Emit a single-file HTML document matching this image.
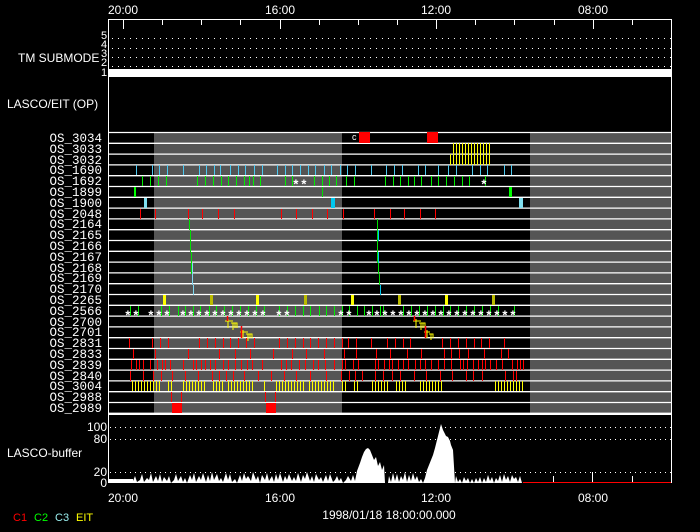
<!DOCTYPE html>
<html><head><meta charset="utf-8"><style>
html,body{margin:0;padding:0;background:#000;}
svg{display:block}
text{font-family:"Liberation Sans",sans-serif;fill:#fff;font-size:12px}
.m{font-family:"Liberation Mono",monospace;font-size:12.5px}
.a{font-family:"Liberation Mono",monospace;font-size:13px;font-weight:bold}
</style></head><body>
<svg width="700" height="532" viewBox="0 0 700 532" xmlns="http://www.w3.org/2000/svg">
<defs>
<pattern id="yp" width="3" height="10" patternUnits="userSpaceOnUse"><rect x="0" y="0" width="1" height="10" fill="#ffff00"/></pattern>
</defs>
<rect width="700" height="532" fill="#000"/>
<g text-anchor="middle">
<text x="123" y="14">20:00</text><text x="280" y="14">16:00</text><text x="436" y="14">12:00</text><text x="593" y="14">08:00</text>
</g>
<path d="M108.5 483 V19.5 H671.5 V483" stroke="#fff" fill="none"/>
<path d="M123.5 20v9M280.5 20v9M436.5 20v9M593.5 20v9M162.5 20v5M201.5 20v5M240.5 20v5M319.5 20v5M358.5 20v5M397.5 20v5M475.5 20v5M514.5 20v5M554.5 20v5M632.5 20v5" stroke="#fff"/>
<text x="18" y="62">TM SUBMODE</text>
<g text-anchor="middle"><text x="104" y="39" style="font-size:11px">5</text><text x="104" y="48" style="font-size:11px">4</text><text x="104" y="57" style="font-size:11px">3</text><text x="104" y="66" style="font-size:11px">2</text><text x="104" y="76" style="font-size:11px">1</text></g>
<path d="M112 38.5H671M112 48.5H671M112 57.5H671M112 66.5H671" stroke="#fff" stroke-dasharray="1 5"/>
<rect x="109" y="69" width="562" height="8" fill="#fff"/>
<text x="7" y="108">LASCO/EIT (OP)</text>
<rect x="154" y="132" width="188" height="281" fill="#555"/>
<rect x="530" y="132" width="141" height="281" fill="#555"/>
<path d="M109 132.5H671M109 143.3H671M109 154.1H671M109 164.9H671M109 175.7H671M109 186.5H671M109 197.3H671M109 208.1H671M109 218.9H671M109 229.7H671M109 240.5H671M109 251.3H671M109 262.1H671M109 272.9H671M109 283.7H671M109 294.5H671M109 305.3H671M109 316.1H671M109 326.9H671M109 337.7H671M109 348.5H671M109 359.3H671M109 370.1H671M109 380.9H671M109 391.7H671M109 402.5H671M109 413.3H671" stroke="#fff" stroke-width="1.3"/>
<g text-anchor="end">
<text class="m" x="102" y="142">OS_3034</text><text class="m" x="102" y="153">OS_3033</text><text class="m" x="102" y="164">OS_3032</text><text class="m" x="102" y="174">OS_1690</text><text class="m" x="102" y="185">OS_1692</text><text class="m" x="102" y="196">OS_1899</text><text class="m" x="102" y="207">OS_1900</text><text class="m" x="102" y="218">OS_2048</text><text class="m" x="102" y="228">OS_2164</text><text class="m" x="102" y="239">OS_2165</text><text class="m" x="102" y="250">OS_2166</text><text class="m" x="102" y="261">OS_2167</text><text class="m" x="102" y="272">OS_2168</text><text class="m" x="102" y="282">OS_2169</text><text class="m" x="102" y="293">OS_2170</text><text class="m" x="102" y="304">OS_2265</text><text class="m" x="102" y="315">OS_2566</text><text class="m" x="102" y="326">OS_2700</text><text class="m" x="102" y="336">OS_2701</text><text class="m" x="102" y="347">OS_2831</text><text class="m" x="102" y="358">OS_2833</text><text class="m" x="102" y="369">OS_2839</text><text class="m" x="102" y="380">OS_2840</text><text class="m" x="102" y="390">OS_3004</text><text class="m" x="102" y="401">OS_2988</text><text class="m" x="102" y="412">OS_2989</text>
</g>
<rect x="359" y="132" width="11" height="11" fill="#f00"/><rect x="427" y="132" width="11" height="11" fill="#f00"/>
<text x="352" y="140" style="font-size:9px">c</text>
<rect x="453" y="143" width="39" height="11" fill="url(#yp)"/>
<rect x="448" y="154" width="44" height="11" fill="url(#yp)"/>
<path d="M136.5 165v10M152.5 165v10M159.5 165v10M167.5 165v10M183.5 165v10M199.5 165v10M206.5 165v10M214.5 165v10M220.5 165v10M230.5 165v10M238.5 165v10M245.5 165v10M254.5 165v10M262.5 165v10M277.5 165v10M285.5 165v10M292.5 165v10M300.5 165v10M308.5 165v10M315.5 165v10M324.5 165v10M331.5 165v10M340.5 165v10M347.5 165v10M355.5 165v10M371.5 165v10M386.5 165v10M394.5 165v10M402.5 165v10M418.5 165v10M425.5 165v10M438.5 165v10M448.5 165v10M456.5 165v10M472.5 165v10M480.5 165v10M487.5 165v10M504.5 165v10M511.5 165v10" stroke="#4cc8f0"/>
<path d="M142.5 176v10M150.5 176v10M158.5 176v10M166.5 176v10M197.5 176v10M205.5 176v10M213.5 176v10M221.5 176v10M228.5 176v10M236.5 176v10M244.5 176v10M249.5 176v10M253.5 176v10M260.5 176v10M285.5 176v10M292.5 176v10M314.5 176v10M322.5 176v10M329.5 176v10M336.5 176v10M346.5 176v10M354.5 176v10M385.5 176v10M393.5 176v10M400.5 176v10M408.5 176v10M414.5 176v10M421.5 176v10M431.5 176v10M438.5 176v10M446.5 176v10M454.5 176v10M462.5 176v10M469.5 176v10M485.5 176v10" stroke="#0e0"/>
<text class="a" x="292" y="189">*</text><text class="a" x="300" y="189">*</text><text class="a" x="480" y="189">*</text>
<rect x="134" y="187" width="2" height="10" fill="#0f0"/><rect x="322" y="187" width="1" height="10" fill="#0d0"/><rect x="509" y="187" width="3" height="10" fill="#0f0"/>
<rect x="144" y="198" width="3" height="10" fill="#80e0f0"/><rect x="331" y="198" width="4" height="10" fill="#00c8f0"/><rect x="519" y="198" width="4" height="10" fill="#80e0f0"/>
<path d="M140.5 209v10M155.5 209v10M188.5 209v10M202.5 209v10M218.5 209v10M234.5 209v10M281.5 209v10M296.5 209v10M312.5 209v10M327.5 209v10M343.5 209v10M374.5 209v10M390.5 209v10M404.5 209v10M420.5 209v10M435.5 209v10" stroke="#f00"/>
<path d="M189.5 219v11M190.5 230v11M190.5 241v11M191.5 252v11M191.5 263v11" stroke="#0d0"/>
<path d="M192.5 263v11M192.5 274v11M193.5 285v10" stroke="#80d8f0"/>
<path d="M377.5 219v22M377.5 241v22M378.5 263v11M379.5 274v11" stroke="#0d0"/>
<path d="M378.5 230v11M378.5 252v11M380.5 285v10" stroke="#00c8f0"/>
<rect x="163" y="295" width="3" height="10" fill="#ff0"/><rect x="210" y="295" width="3" height="10" fill="#bb0"/><rect x="256" y="295" width="3" height="10" fill="#ff0"/><rect x="304" y="295" width="3" height="10" fill="#bb0"/><rect x="351" y="295" width="3" height="10" fill="#ff0"/><rect x="398" y="295" width="3" height="10" fill="#bb0"/><rect x="445" y="295" width="3" height="10" fill="#ff0"/><rect x="492" y="295" width="3" height="10" fill="#bb0"/>
<path d="M130.5 306v10M138.5 306v10M161.5 306v10M169.5 306v10M178.5 306v10M185.5 306v10M193.5 306v10M200.5 306v10M209.5 306v10M216.5 306v10M224.5 306v10M232.5 306v10M240.5 306v10M248.5 306v10M256.5 306v10M264.5 306v10M279.5 306v10M287.5 306v10M295.5 306v10M303.5 306v10M310.5 306v10M319.5 306v10M326.5 306v10M334.5 306v10M342.5 306v10M349.5 306v10M357.5 306v10M364.5 306v10M372.5 306v10M380.5 306v10M383.5 306v10M403.5 306v10M411.5 306v10M419.5 306v10M427.5 306v10M435.5 306v10M443.5 306v10M450.5 306v10M458.5 306v10M466.5 306v10M474.5 306v10M482.5 306v10M490.5 306v10M498.5 306v10M514.5 306v10" stroke="#0e0"/>
<g class="a">
<text class="a" x="124" y="320">*</text><text class="a" x="132" y="320">*</text><text class="a" x="147" y="320">*</text><text class="a" x="155" y="320">*</text><text class="a" x="163" y="320">*</text><text class="a" x="179" y="320">*</text><text class="a" x="187" y="320">*</text><text class="a" x="195" y="320">*</text><text class="a" x="203" y="320">*</text><text class="a" x="211" y="320">*</text><text class="a" x="219" y="320">*</text><text class="a" x="227" y="320">*</text><text class="a" x="235" y="320">*</text><text class="a" x="243" y="320">*</text><text class="a" x="251" y="320">*</text><text class="a" x="259" y="320">*</text><text class="a" x="275" y="320">*</text><text class="a" x="283" y="320">*</text>
<text class="a" x="337" y="320">*</text><text class="a" x="345" y="320">*</text><text class="a" x="365" y="320">*</text><text class="a" x="373" y="320">*</text><text class="a" x="381" y="320">*</text><text class="a" x="389" y="320">*</text><text class="a" x="397" y="320">*</text><text class="a" x="405" y="320">*</text><text class="a" x="413" y="320">*</text><text class="a" x="421" y="320">*</text><text class="a" x="429" y="320">*</text><text class="a" x="437" y="320">*</text><text class="a" x="445" y="320">*</text><text class="a" x="453" y="320">*</text><text class="a" x="461" y="320">*</text><text class="a" x="469" y="320">*</text><text class="a" x="477" y="320">*</text><text class="a" x="485" y="320">*</text><text class="a" x="493" y="320">*</text><text class="a" x="501" y="320">*</text><text class="a" x="509" y="320">*</text>
</g>
<path d="M225 321h8M228 319v9M231 323h6v5M233 323v7M235 323v5M240 332h8M243 330v8M246 334h6v4M248 334v7M250 334v4" stroke="#ff0" fill="none"/>
<path d="M413 321h8M416 319v9M419 323h6v5M421 323v7M423 323v5M424 332h6M427 330v8M429 334h4v4M431 334v6" stroke="#ff0" fill="none"/>
<path d="M227.5 316v5M241.5 326v12M414.5 316v5M425.5 326v12" stroke="#f00" stroke-width="1.5"/>
<path d="M129.5 338v10M152.5 338v10M160.5 338v10M168.5 338v10M199.5 338v10M207.5 338v10M215.5 338v10M223.5 338v10M230.5 338v10M238.5 338v10M246.5 338v10M254.5 338v10M279.5 338v10M287.5 338v10M295.5 338v10M303.5 338v10M310.5 338v10M318.5 338v10M326.5 338v10M334.5 338v10M342.5 338v10M348.5 338v10M356.5 338v10M371.5 338v10M387.5 338v10M395.5 338v10M403.5 338v10M410.5 338v10M442.5 338v10M450.5 338v10M458.5 338v10M466.5 338v10M474.5 338v10M481.5 338v10M489.5 338v10M504.5 338v10" stroke="#f00"/>
<path d="M133.5 349v10M155.5 349v10M188.5 349v10M219.5 349v10M235.5 349v10M250.5 349v10M273.5 349v10M292.5 349v10M306.5 349v10M324.5 349v10M344.5 349v10M356.5 349v10M376.5 349v10M390.5 349v10M407.5 349v10M421.5 349v10M444.5 349v10M451.5 349v10M459.5 349v10M468.5 349v10M484.5 349v10M501.5 349v10M508.5 349v10" stroke="#f00"/>
<path d="M131.5 360v10M136.5 360v10M139.5 360v10M143.5 360v10M150.5 360v10M157.5 360v10M162.5 360v10M165.5 360v10M170.5 360v10M183.5 360v10M193.5 360v10M196.5 360v10M201.5 360v10M205.5 360v10M210.5 360v10M215.5 360v10M223.5 360v10M228.5 360v10M235.5 360v10M241.5 360v10M247.5 360v10M252.5 360v10M262.5 360v10M281.5 360v10M286.5 360v10M291.5 360v10M299.5 360v10M305.5 360v10M313.5 360v10M318.5 360v10M325.5 360v10M334.5 360v10M342.5 360v10M345.5 360v10M353.5 360v10M358.5 360v10M375.5 360v10M378.5 360v10M384.5 360v10M389.5 360v10M392.5 360v10M398.5 360v10M403.5 360v10M408.5 360v10M415.5 360v10M420.5 360v10M425.5 360v10M431.5 360v10M438.5 360v10M444.5 360v10M451.5 360v10M460.5 360v10M463.5 360v10M467.5 360v10M473.5 360v10M478.5 360v10M482.5 360v10M485.5 360v10M490.5 360v10M496.5 360v10M502.5 360v10M512.5 360v10M517.5 360v10M520.5 360v10M523.5 360v10" stroke="#f00"/>
<path d="M130.5 371v10M143.5 371v10M153.5 371v10M161.5 371v10M172.5 371v10M185.5 371v10M198.5 371v10M212.5 371v10M219.5 371v10M226.5 371v10M233.5 371v10M244.5 371v10M258.5 371v10M271.5 371v10M284.5 371v10M296.5 371v10M310.5 371v10M326.5 371v10M341.5 371v10M349.5 371v10M355.5 371v10M362.5 371v10M375.5 371v10M383.5 371v10M392.5 371v10M400.5 371v10M414.5 371v10M426.5 371v10M440.5 371v10M452.5 371v10M466.5 371v10M473.5 371v10M482.5 371v10M505.5 371v10M513.5 371v10M516.5 371v10" stroke="#f00"/>
<g fill="url(#yp)">
<rect x="130" y="381" width="30" height="10"/><rect x="167" y="381" width="5" height="10"/><rect x="182" y="381" width="25" height="10"/><rect x="213" y="381" width="10" height="10"/><rect x="228" y="381" width="26" height="10"/><rect x="262" y="381" width="4" height="10"/><rect x="276" y="381" width="28" height="10"/><rect x="308" y="381" width="26" height="10"/><rect x="340" y="381" width="8" height="10"/><rect x="354" y="381" width="6" height="10"/><rect x="370" y="381" width="20" height="10"/><rect x="396" y="381" width="12" height="10"/><rect x="418" y="381" width="24" height="10"/><rect x="495" y="381" width="29" height="10"/>
</g>
<path d="M171.5 392v10M181.5 392v10M265.5 392v10M275.5 392v10" stroke="#f00"/>
<rect x="172" y="403" width="10" height="10" fill="#f00"/><rect x="266" y="403" width="10" height="10" fill="#f00"/>
<path d="M108.5 414.5H671.5V483" stroke="#fff" fill="none"/>
<path d="M110 427.5H671M110 439.5H671M110 472.5H671" stroke="#fff" stroke-dasharray="1 4"/>
<text x="7" y="457">LASCO-buffer</text>
<g text-anchor="end"><text x="107" y="431">100</text><text x="107" y="443">80</text><text x="107" y="476">20</text><text x="107" y="487">0</text></g>
<polygon fill="#fff" points="108,483 108,479 133,479 133,481 135,476 137,482 140,480 142,474 144,482 147,478 149,480 151,473 153,482 156,476 158,481 160,474 162,482 164,477 167,481 169,476 171,483 174,480 176,474 178,481 181,476 183,482 185,478 187,483 190,475 192,480 194,473 196,482 199,476 201,480 203,473 206,482 208,475 210,481 212,472 214,480 217,474 219,481 221,478 223,482 226,473 228,480 230,474 232,482 235,479 237,483 240,475 242,481 244,473 246,479 248,476 251,481 253,472 256,480 258,476 260,483 262,475 265,480 267,473 269,481 272,476 274,482 276,474 278,480 280,473 283,482 285,476 287,480 289,474 292,481 294,477 296,481 298,473 301,482 303,475 305,479 307,472 310,481 312,476 314,482 316,474 319,480 321,477 323,482 326,475 328,481 330,474 333,482 335,480 337,476 339,481 341,478 343,483 346,480 348,476 351,481 353,475 355,481 357,471 360,463 362,457 364,452 366,449 368,448 370,450 372,455 374,460 376,457 378,466 380,462 382,470 384,465 385,483 388,483 389,476 391,482 393,473 395,481 397,474 399,482 401,476 403,480 405,472 407,482 409,475 411,481 413,473 415,480 417,476 419,482 421,479 423,483 425,478 427,470 429,465 431,460 433,455 435,448 437,440 439,432 440,428 441,424 443,430 444,432 446,436 448,437 450,441 451,445 453,450 455,483 456,476 458,482 460,479 462,483 464,477 466,481 468,478 470,483 472,479 474,483 476,478 478,482 480,477 482,483 484,478 486,482 488,475 490,481 492,477 494,483 496,478 498,481 500,475 502,482 504,474 506,480 508,476 510,482 512,475 514,479 516,477 518,482 520,476 522,483 523,483"/>
<path d="M523 482.5H671" stroke="#f00"/>
<path d="M553.5 476v6M592.5 472v10M632.5 476v6" stroke="#fff"/>
<g text-anchor="middle"><text x="123" y="502">20:00</text><text x="280" y="502">16:00</text><text x="436" y="502">12:00</text><text x="593" y="502">08:00</text>
<text x="389" y="519">1998/01/18 18:00:00.000</text></g>
<text x="13" y="521" style="font-size:11px;fill:#f00">C1</text>
<text x="34" y="521" style="font-size:11px;fill:#0f0">C2</text>
<text x="55" y="521" style="font-size:11px;fill:#9ee">C3</text>
<text x="76" y="521" style="font-size:11px;fill:#ff0">EIT</text>
</svg>
</body></html>
